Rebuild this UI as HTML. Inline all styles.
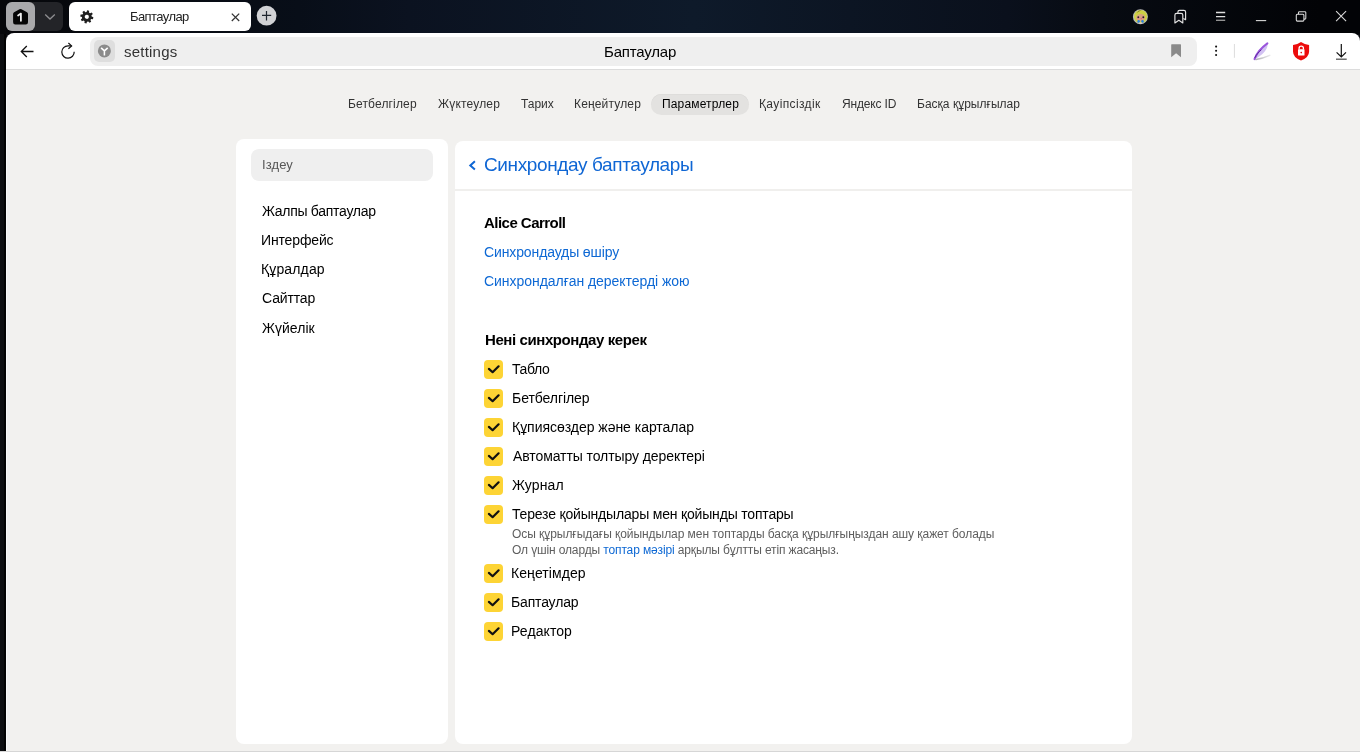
<!DOCTYPE html>
<html><head><meta charset="utf-8">
<style>
*{box-sizing:border-box;margin:0;padding:0}
html,body{width:1360px;height:752px;overflow:hidden}
body{position:relative;background:#0a0b10;font-family:"Liberation Sans",sans-serif;color:#000}
.abs{position:absolute}
.tx{position:absolute;white-space:nowrap;line-height:1;will-change:transform}
svg{position:absolute;overflow:visible}
#titlebar{left:0;top:0;width:1360px;height:34px;background:linear-gradient(90deg,#06070a 0%,#080e18 22%,#0b1220 30%,#0e1a2a 51%,#0a101c 74%,#070b12 81%,#020306 97%)}
#toolbar{left:6px;top:33px;width:1354px;height:36px;background:#fff;border-radius:8px 8px 0 0}
#sep{left:6px;top:69px;width:1354px;height:1px;background:#dcdcdc}
#page{left:6px;top:70px;width:1354px;height:682px;background:#f2f1ef}
#wline{left:6px;top:70px;width:1px;height:681px;background:#fafafa}
#bline{left:0;top:751px;width:1360px;height:1px;background:#d6d6d6}
.card{position:absolute;background:#fff;border-radius:8px}
.cb{position:absolute;left:484.2px;width:18.4px;height:18.4px;background:#fdd435;border-radius:4px}
</style></head><body>
<div id="titlebar" class="abs"></div>
<div id="toolbar" class="abs"></div>
<div id="sep" class="abs"></div>
<div id="page" class="abs"></div>
<div id="wline" class="abs"></div>
<div id="bline" class="abs"></div>
<div class="abs" style="left:0;top:34px;width:6px;height:717px;background:linear-gradient(90deg,#0d0e11 0,#0d0e11 4px,#030303 4px)"></div>

<!-- ===== title bar: tabs ===== -->
<div class="abs" style="left:6px;top:2px;width:57px;height:29px;background:#232428;border-radius:6px"></div>
<div class="abs" style="left:6px;top:2px;width:29.2px;height:29px;background:#a9a9ab;border-radius:6px"></div>
<svg style="left:0;top:0" width="70" height="34">
 <path d="M20.5 9 Q21 9 21.5 9.3 L27 12.3 Q28 12.9 28 14 V22.2 Q28 24.4 25.8 24.4 H15.3 Q13.1 24.4 13.1 22.2 V14 Q13.1 12.9 14.1 12.3 L19.5 9.3 Q20 9 20.5 9 Z" fill="#050505"/>
 <path d="M18.1 15.5 L20.9 13.6 V20.8" fill="none" stroke="#eee" stroke-width="1.8" stroke-linejoin="round" stroke-linecap="round"/>
 <polyline points="45.2,14.6 50,19 54.8,14.6" fill="none" stroke="#8e8e91" stroke-width="1.3"/>
</svg>
<div class="abs" style="left:69px;top:2px;width:182px;height:29px;background:#fff;border-radius:6px"></div>
<svg style="left:0;top:0" width="300" height="34">
 <g transform="translate(86.8 16.8) rotate(12)"><path fill="#1f1f1f" fill-rule="evenodd" d="M6.52 -1.03 L6.52 1.03 L4.75 1.22 L4.22 2.49 L5.34 3.88 L3.88 5.34 L2.49 4.22 L1.22 4.75 L1.03 6.52 L-1.03 6.52 L-1.22 4.75 L-2.49 4.22 L-3.88 5.34 L-5.34 3.88 L-4.22 2.49 L-4.75 1.22 L-6.52 1.03 L-6.52 -1.03 L-4.75 -1.22 L-4.22 -2.49 L-5.34 -3.88 L-3.88 -5.34 L-2.49 -4.22 L-1.22 -4.75 L-1.03 -6.52 L1.03 -6.52 L1.22 -4.75 L2.49 -4.22 L3.88 -5.34 L5.34 -3.88 L4.22 -2.49 L4.75 -1.22Z M2.1 0 A2.1 2.1 0 1 0 -2.1 0 A2.1 2.1 0 1 0 2.1 0Z"/></g>
 <path d="M231.8 13.6 L239.2 21 M239.2 13.6 L231.8 21" stroke="#333" stroke-width="1.25" fill="none"/>
 <circle cx="266.6" cy="15.7" r="9.9" fill="#d1d2d5"/>
 <path d="M262 15.4 H271.2 M266.5 10.9 V20.4" stroke="#1e242e" stroke-width="1.2" fill="none"/>
</svg>

<!-- ===== title bar: right icons ===== -->
<svg style="left:1100px;top:0" width="260" height="34">
 <!-- avatar -->
 <circle cx="40.4" cy="16.7" r="7.5" fill="#b9b9bb"/>
 <circle cx="40.6" cy="16.5" r="6.6" fill="#cdd045"/>
 <path d="M36.3 13.2 Q38.5 10.2 41.8 10.1 Q37.8 11.8 36.3 13.2Z" fill="#5a5a20"/>
 <ellipse cx="40.6" cy="17.6" rx="4.4" ry="3.7" fill="#d9a27e"/>
 <path d="M36 15.2 Q40.5 12.2 45.2 15 Q45 13 40.6 12.4 Q36.5 12.6 36 15.2Z" fill="#cdd045"/>
 <circle cx="38.3" cy="17.3" r="0.95" fill="#231a2a"/><circle cx="43.3" cy="17.3" r="0.95" fill="#231a2a"/>
 <circle cx="37.9" cy="18.6" r="0.8" fill="#e27a9a" opacity="0.8"/>
 <circle cx="41.3" cy="18.5" r="0.65" fill="#e2508a"/>
 <circle cx="38.6" cy="21.4" r="1.3" fill="#2a7fe0"/><circle cx="42.5" cy="21.4" r="1.3" fill="#2a7fe0"/>
 <path d="M39.2 22.6 H41.8 V23.6 H39.2Z" fill="#f2d6d6"/>
 <!-- collections -->
 <path d="M77.9 13.4 V12.1 Q77.9 10.4 79.6 10.4 H83.9 Q85.6 10.4 85.6 12.1 V19.7 L83.3 18.4" fill="none" stroke="#e4e4e4" stroke-width="1.15" stroke-linejoin="round"/>
 <path d="M74.9 23 V15 Q74.9 13.3 76.6 13.3 H81.1 Q82.8 13.3 82.8 15 V23 L78.85 20.3 Z" fill="#0a0c12" stroke="#e4e4e4" stroke-width="1.15" stroke-linejoin="round"/>
 <!-- hamburger -->
 <path d="M116 12.5 H125.2 M116 16.6 H125.2" stroke="#dedede" stroke-width="1.3"/>
 <path d="M116 20.3 H125.2" stroke="#9a9a9a" stroke-width="1.3"/>
 <!-- minimize -->
 <path d="M155.9 20.6 H166.2" stroke="#d8d8d8" stroke-width="1.1"/>
 <!-- restore -->
 <rect x="196.3" y="14.3" width="7.6" height="6.8" rx="1" fill="none" stroke="#dcdcdc" stroke-width="1.05"/>
 <path d="M198.5 14.3 V12.6 Q198.5 11.7 199.4 11.7 H204.9 Q205.8 11.7 205.8 12.6 V18.2 Q205.8 19.1 204.9 19.1 H203.9" fill="none" stroke="#dcdcdc" stroke-width="1.05"/>
 <!-- close -->
 <path d="M236.1 11.2 L246.1 21.2 M246.1 11.2 L236.1 21.2" stroke="#d8d8d8" stroke-width="1.1"/>
</svg>

<!-- ===== toolbar ===== -->
<svg style="left:0;top:33px" width="130" height="36">
 <path d="M21.3 18.5 H33.5 M26.8 13 L21.3 18.5 L26.8 24" fill="none" stroke="#111" stroke-width="1.3"/>
 <path d="M74.2 18.8 A6.2 6.2 0 1 1 68 12.8 H71.5" fill="none" stroke="#111" stroke-width="1.2"/>
 <path d="M68.4 10 L71.6 12.9 L68.4 15.8" fill="none" stroke="#111" stroke-width="1.2"/>
</svg>
<div class="abs" style="left:90px;top:36.5px;width:1106.7px;height:29.5px;background:#efefef;border-radius:8px"></div>
<div class="abs" style="left:93.6px;top:40px;width:21.2px;height:21.8px;background:#dedede;border-radius:5px"></div>
<svg style="left:0;top:33px" width="130" height="36">
 <circle cx="104.4" cy="17.9" r="6.5" fill="#8b8b8b"/>
 <path d="M101.1 14.9 L104.4 17.9 L107.7 14.9 M104.4 17.9 V22.4" fill="none" stroke="#fff" stroke-width="1.55"/>
</svg>
<svg style="left:1160px;top:33px" width="200" height="36">
 <path d="M11.2 11.8 Q11.2 11.2 11.8 11.2 H20.4 Q21 11.2 21 11.8 V24.2 L16.1 20.3 L11.2 24.2 Z" fill="#8a8a8a"/>
 <circle cx="56.1" cy="13.6" r="1.05" fill="#111"/><circle cx="56.1" cy="17.7" r="1.05" fill="#111"/><circle cx="56.1" cy="22" r="1.05" fill="#111"/>
 <path d="M74.4 11 V24.8" stroke="#dcdcdc" stroke-width="1"/>
 <!-- feather -->
 <defs><linearGradient id="shg" x1="0" y1="0" x2="1" y2="0"><stop offset="0" stop-color="#b0b0b4"/><stop offset="1" stop-color="#e8e8ea"/></linearGradient></defs>
 <path d="M96 26.6 Q102 25.8 109.8 22.4" stroke="url(#shg)" stroke-width="1.5" fill="none" stroke-linecap="round"/>
 <path d="M94.4 26.3 C95.5 20.5 100.5 14.8 107.6 10.2 C108 14.5 105.5 18.8 100.8 22.3 C98.8 23.9 96.6 25.3 94.4 26.3Z" fill="#d2c2f2"/>
 <path d="M94.5 26.1 C96.5 20.5 100.8 15.2 107.4 10.4" stroke="#9a55dc" stroke-width="2" fill="none" stroke-linecap="round"/>
 <path d="M95 24.5 C96.5 21.5 98.5 19 101 17" stroke="#5e2a9e" stroke-width="1" fill="none" stroke-linecap="round"/>
 <!-- shield -->
 <path d="M141 9 Q137.5 11.5 133 12 V18.5 Q133 24.5 141 27.5 Q149.1 24.5 149.1 18.5 V12 Q144.5 11.5 141 9Z" fill="#ec0c0c"/>
 <rect x="138" y="16.2" width="6.5" height="6.3" rx="0.6" fill="#fff"/>
 <path d="M139.1 16.5 V15.3 Q139.1 13.2 141.25 13.2 Q143.4 13.2 143.4 15.3 V16.5" fill="none" stroke="#fff" stroke-width="1.3"/>
 <circle cx="141.25" cy="19.6" r="0.8" fill="#ec0c0c"/>
 <!-- download -->
 <path d="M181.3 11 V24 M176.6 19.3 L181.3 24 L186 19.3" fill="none" stroke="#111" stroke-width="1.2"/>
 <path d="M176 26.2 H186.7" stroke="#555" stroke-width="1.3"/>
</svg>

<!-- ===== nav ===== -->
<div class="abs" style="left:651px;top:94px;width:98px;height:21px;background:#e3e2e0;border-radius:10.5px;box-shadow:inset 0 0.6px 0 #d9d8d6"></div>

<!-- ===== cards ===== -->
<div class="card" style="left:236px;top:139px;width:212px;height:605px"></div>
<div class="card" style="left:455px;top:141px;width:677px;height:603px"></div>
<div class="abs" style="left:455px;top:189px;width:677px;height:2px;background:#f0efed"></div>
<div class="abs" style="left:251px;top:149px;width:182px;height:32px;background:#efefef;border-radius:8px"></div>
<svg style="left:455px;top:140px" width="40" height="50">
 <polyline points="19.9,21.3 15.3,25.4 19.9,29.5" fill="none" stroke="#0f66d4" stroke-width="2"/>
</svg>

<!-- checkboxes -->
<div class="cb" style="top:360.3px"></div>
<div class="cb" style="top:389.3px"></div>
<div class="cb" style="top:418.3px"></div>
<div class="cb" style="top:447.3px"></div>
<div class="cb" style="top:476.3px"></div>
<div class="cb" style="top:505.3px"></div>
<div class="cb" style="top:564.3px"></div>
<div class="cb" style="top:593.3px"></div>
<div class="cb" style="top:622.3px"></div>
<svg style="left:484.2px;top:0" width="20" height="700"><g fill="none" stroke="#111" stroke-width="2.2" stroke-linecap="round" stroke-linejoin="round"><path d="M4.9 368.9 L8.6 372.2 L14.6 366.3"/><path d="M4.9 397.9 L8.6 401.2 L14.6 395.3"/><path d="M4.9 426.9 L8.6 430.2 L14.6 424.3"/><path d="M4.9 455.9 L8.6 459.2 L14.6 453.3"/><path d="M4.9 484.9 L8.6 488.2 L14.6 482.3"/><path d="M4.9 513.9 L8.6 517.2 L14.6 511.3"/><path d="M4.9 572.9 L8.6 576.2 L14.6 570.3"/><path d="M4.9 601.9 L8.6 605.2 L14.6 599.3"/><path d="M4.9 630.9 L8.6 634.2 L14.6 628.3"/></g></svg>

<div id="t_tab" class="tx" style="left:130.04px;top:10.00px;font-size:13px;font-weight:400;color:#222;letter-spacing:-0.587px">Баптаулар</div>
<div id="t_addr" class="tx" style="left:124.33px;top:43.70px;font-size:15px;font-weight:400;color:#333;letter-spacing:0.221px">settings</div>
<div id="t_title" class="tx" style="left:603.76px;top:43.90px;font-size:15px;font-weight:400;color:#000;letter-spacing:-0.194px">Баптаулар</div>
<div id="n1" class="tx" style="left:348.02px;top:97.94px;font-size:12px;font-weight:400;color:#333;letter-spacing:0.152px">Бетбелгілер</div>
<div id="n2" class="tx" style="left:437.55px;top:97.94px;font-size:12px;font-weight:400;color:#333;letter-spacing:0.172px">Жүктеулер</div>
<div id="n3" class="tx" style="left:520.64px;top:97.94px;font-size:12px;font-weight:400;color:#333;letter-spacing:-0.028px">Тарих</div>
<div id="n4" class="tx" style="left:573.61px;top:97.94px;font-size:12px;font-weight:400;color:#333;letter-spacing:0.163px">Кеңейтулер</div>
<div id="n5" class="tx" style="left:662.44px;top:97.94px;font-size:12px;font-weight:400;color:#000;letter-spacing:0.155px">Параметрлер</div>
<div id="n6" class="tx" style="left:759.02px;top:97.94px;font-size:12px;font-weight:400;color:#333;letter-spacing:0.370px">Қауіпсіздік</div>
<div id="n7" class="tx" style="left:841.91px;top:97.94px;font-size:12px;font-weight:400;color:#333;letter-spacing:-0.166px">Яндекс ID</div>
<div id="n8" class="tx" style="left:917.02px;top:97.94px;font-size:12px;font-weight:400;color:#333;letter-spacing:0.012px">Басқа құрылғылар</div>
<div id="s0" class="tx" style="left:261.66px;top:158.00px;font-size:13px;font-weight:400;color:#575757;letter-spacing:0.094px">Іздеу</div>
<div id="s1" class="tx" style="left:261.80px;top:203.95px;font-size:14px;font-weight:400;color:#000;letter-spacing:-0.285px">Жалпы баптаулар</div>
<div id="s2" class="tx" style="left:261.38px;top:233.05px;font-size:14px;font-weight:400;color:#000;letter-spacing:-0.143px">Интерфейс</div>
<div id="s3" class="tx" style="left:260.98px;top:262.05px;font-size:14px;font-weight:400;color:#000;letter-spacing:0.136px">Құралдар</div>
<div id="s4" class="tx" style="left:261.52px;top:291.45px;font-size:14px;font-weight:400;color:#000;letter-spacing:-0.140px">Сайттар</div>
<div id="s5" class="tx" style="left:262.20px;top:320.65px;font-size:14px;font-weight:400;color:#000;letter-spacing:0.033px">Жүйелік</div>
<div id="h1" class="tx" style="left:484.20px;top:154.72px;font-size:19px;font-weight:400;color:#0f66d4;letter-spacing:-0.382px">Синхрондау баптаулары</div>
<div id="a1" class="tx" style="left:484.04px;top:215.30px;font-size:15px;font-weight:700;color:#000;letter-spacing:-0.528px">Alice Carroll</div>
<div id="l1" class="tx" style="left:484.22px;top:245.05px;font-size:14px;font-weight:400;color:#0d68d4;letter-spacing:-0.119px">Синхрондауды өшіру</div>
<div id="l2" class="tx" style="left:484.22px;top:273.75px;font-size:14px;font-weight:400;color:#0d68d4;letter-spacing:-0.046px">Синхрондалған деректерді жою</div>
<div id="h2" class="tx" style="left:484.80px;top:332.20px;font-size:15px;font-weight:700;color:#000;letter-spacing:-0.412px">Нені синхрондау керек</div>
<div id="i1" class="tx" style="left:511.55px;top:362.45px;font-size:14px;font-weight:400;color:#000;letter-spacing:-0.356px">Табло</div>
<div id="i2" class="tx" style="left:512.28px;top:391.45px;font-size:14px;font-weight:400;color:#000;letter-spacing:-0.062px">Бетбелгілер</div>
<div id="i3" class="tx" style="left:511.88px;top:420.45px;font-size:14px;font-weight:400;color:#000;letter-spacing:-0.029px">Құпиясөздер және карталар</div>
<div id="i4" class="tx" style="left:512.76px;top:449.45px;font-size:14px;font-weight:400;color:#000;letter-spacing:-0.084px">Автоматты толтыру деректері</div>
<div id="i5" class="tx" style="left:512.10px;top:478.45px;font-size:14px;font-weight:400;color:#000;letter-spacing:0.095px">Журнал</div>
<div id="i6" class="tx" style="left:512.15px;top:507.45px;font-size:14px;font-weight:400;color:#000;letter-spacing:-0.182px">Терезе қойындылары мен қойынды топтары</div>
<div id="d1" class="tx" style="left:511.74px;top:527.84px;font-size:12px;font-weight:400;color:#5e5e5e;letter-spacing:-0.053px">Осы құрылғыдағы қойындылар мен топтарды басқа құрылғыңыздан ашу қажет болады</div>
<div id="d2" class="tx" style="left:511.94px;top:544.44px;font-size:12px;font-weight:400;color:#5e5e5e;letter-spacing:-0.133px">Ол үшін оларды <span style="color:#0d68d4">топтар мәзірі</span> арқылы бұлтты етіп жасаңыз.</div>
<div id="i7" class="tx" style="left:511.28px;top:566.45px;font-size:14px;font-weight:400;color:#000;letter-spacing:0.080px">Кеңетімдер</div>
<div id="i8" class="tx" style="left:511.28px;top:595.45px;font-size:14px;font-weight:400;color:#000;letter-spacing:-0.163px">Баптаулар</div>
<div id="i9" class="tx" style="left:511.28px;top:624.45px;font-size:14px;font-weight:400;color:#000;letter-spacing:0.089px">Редактор</div>
</body></html>
